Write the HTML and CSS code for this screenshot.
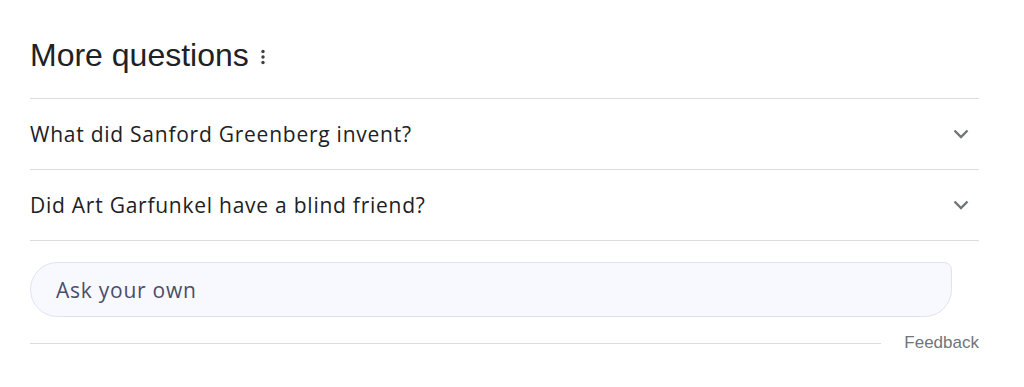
FILE: index.html
```html
<!DOCTYPE html>
<html lang="en">
<head>
    <meta charset="UTF-8">
    <meta name="viewport" content="width=device-width, initial-scale=1.0">
    <title>More questions</title>
    <link rel="stylesheet" href="styles.css">
</head>
<body>
    <div class="rq-block">
        <div class="rq-header">
            <h2>More questions</h2>
            <span class="rq-menu" aria-label="About this result">
                <svg width="4" height="16" viewBox="0 0 4 16"><circle cx="2" cy="2.5" r="1.7"/><circle cx="2" cy="8" r="1.7"/><circle cx="2" cy="13.5" r="1.7"/></svg>
            </span>
        </div>

        <div class="rq-list">
            <div class="rq-item">
                <span>What did Sanford Greenberg invent?</span>
                <svg class="chevron" width="16" height="10" viewBox="0 0 16 10"><path d="M1.5 1.5 L8 8 L14.5 1.5"/></svg>
            </div>
            <div class="rq-item">
                <span>Did Art Garfunkel have a blind friend?</span>
                <svg class="chevron" width="16" height="10" viewBox="0 0 16 10"><path d="M1.5 1.5 L8 8 L14.5 1.5"/></svg>
            </div>
        </div>

        <div class="ask-row">
            <div class="ask-box">Ask your own</div>
        </div>

        <div class="rq-footer">
            <div class="footer-line"></div>
            <span class="feedback">Feedback</span>
        </div>
    </div>
</body>
</html>
```

FILE: styles.css
```css
* { margin: 0; padding: 0; box-sizing: border-box; }
body { background: #fff; font-family: "Open Sans", Roboto, Arial, sans-serif; color: #202124; }
.rq-block { width: 949px; margin-left: 30px; padding-top: 36px; }
.rq-header { display: flex; align-items: center; gap: 12px; height: 63px; border-bottom: 1px solid #dadce0; padding-bottom: 24px; }
.rq-header h2 { font-family: "Liberation Sans", Arial, sans-serif; font-weight: 400; font-size: 32px; line-height: 38px; color: #202124; }
.rq-menu { display: flex; align-items: center; padding-top: 3px; }
.rq-menu svg { fill: #3c4043; }
.rq-item { display: flex; align-items: center; justify-content: space-between; height: 71px; border-bottom: 1px solid #dadce0; font-size: 21px; letter-spacing: 0.75px; color: #202124; }
.chevron { margin-right: 10px; fill: none; stroke: #70757a; stroke-width: 2.4; }
.ask-row { padding: 21px 27px 16px 0; }
.ask-box { height: 55px; border: 1px solid #dde3f6; background: #f8f9fe; border-radius: 28px 8px 28px 28px; padding-left: 25px; display: flex; align-items: center; font-size: 21px; letter-spacing: 0.75px; color: #4a4e69; }
.rq-footer { display: flex; align-items: center; gap: 23px; }
.footer-line { flex: 1; height: 1px; background: #dadce0; }
.feedback { font-family: "Liberation Sans", Arial, sans-serif; font-size: 17px; color: #70757a; line-height: 20px; }
```
